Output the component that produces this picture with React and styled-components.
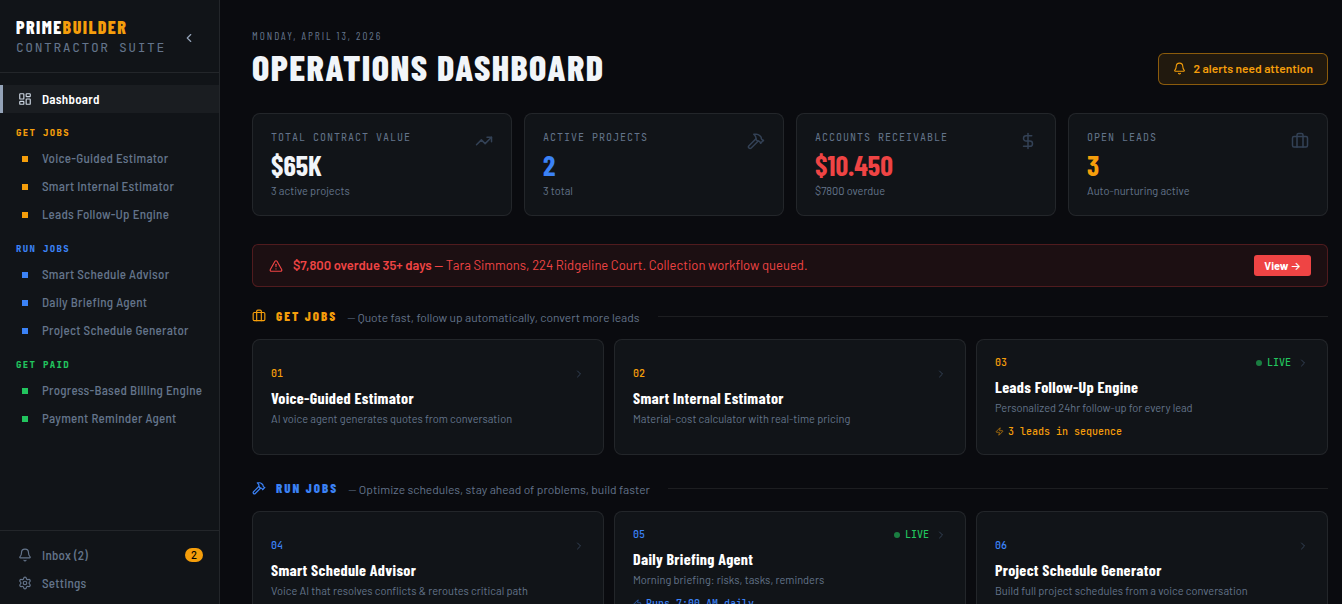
import React from "react";
import styled, { createGlobalStyle } from "styled-components";
import {
  AlertTriangle,
  Bell,
  ChevronLeft,
  ChevronRight,
  DollarSign,
  Hammer,
  LayoutDashboard,
  Settings,
  TrendingUp,
  Zap,
} from "lucide-react";

const sans = `"Barlow", "Roboto", "Liberation Sans", sans-serif`;
const semi = `"Barlow Semi Condensed", "Barlow", "Roboto", sans-serif`;
const condensed = `"Barlow Condensed", "Roboto Condensed", "Liberation Sans Narrow", "Roboto", sans-serif`;
const mono = `"JetBrains Mono", "DejaVu Sans Mono", monospace`;

const amber = "#f59e0b";
const blue = "#3b82f6";
const green = "#22c55e";
const red = "#ef4444";
const muted = "#64748b";
const line = "rgba(255, 255, 255, 0.08)";

const GlobalStyle = createGlobalStyle`
  * { box-sizing: border-box; }
  body {
    margin: 0;
    background: #0a0b0f;
    color: #f1f5f9;
    font-family: ${sans};
  }
  button { font-family: inherit; cursor: pointer; }
  h1, h2, p { margin: 0; }
`;

const Shell = styled.div`
  display: flex;
  height: 100vh;
`;

/* sidebar */

const Sidebar = styled.aside`
  display: flex;
  flex-direction: column;
  flex: none;
  width: 220px;
  background: #111418;
  border-right: 1px solid ${line};
`;

const Brand = styled.div`
  display: flex;
  align-items: center;
  justify-content: space-between;
  padding: 17px 19px 14px 16px;
  border-bottom: 1px solid ${line};
`;

const BrandName = styled.div`
  margin-bottom: 1px;
  font: 800 18px/20px ${condensed};
  letter-spacing: 0.08em;
  color: #fff;

  span { color: ${amber}; }
`;

const BrandTag = styled.div`
  font: 400 13px/20px ${mono};
  letter-spacing: 0.12em;
  color: ${muted};
  white-space: nowrap;
`;

const CollapseButton = styled.button`
  display: flex;
  padding: 4px;
  background: none;
  border: 0;
  color: #94a3b8;
`;

const Nav = styled.nav`
  flex: 1;
  padding-top: 12px;
`;

const NavGroup = styled.div`
  & + & { margin-top: 1px; }
`;

const NavLabel = styled.div`
  padding: 13px 16px 4px;
  font: 800 9px/14px ${mono};
  letter-spacing: 0.15em;
  color: ${(p) => p.$color};
`;

const NavLink = styled.a`
  display: flex;
  align-items: center;
  gap: 10px;
  height: 28px;
  padding: 0 16px 0 15px;
  border-left: 3px solid ${(p) => (p.$active ? "#94a3b8" : "transparent")};
  background: ${(p) => (p.$active ? "rgba(255, 255, 255, 0.04)" : "none")};
  font-family: ${semi};
  font-size: 13px;
  font-weight: ${(p) => (p.$active ? 600 : 500)};
  letter-spacing: 0.02em;
  color: ${(p) => (p.$active ? "#fff" : muted)};
  text-decoration: none;
  white-space: nowrap;

  svg { color: ${(p) => (p.$active ? "#cbd5e1" : muted)}; }
`;

const Square = styled.span`
  width: 6px;
  height: 6px;
  margin: 2px 4px 0;
  background: ${(p) => p.$color};
`;

const Count = styled.span`
  margin-left: auto;
  padding: 0 6px;
  border-radius: 7px;
  background: ${amber};
  font: 500 11px/14px ${sans};
  letter-spacing: 0;
  color: #000;
`;

const SidebarFoot = styled.div`
  padding: 10px 0 7px;
  border-top: 1px solid ${line};
`;

/* main column */

const Main = styled.main`
  flex: 1;
  min-width: 0;
  padding: 28px 14px 28px 32px;
  overflow-y: auto;
  scrollbar-width: none;
`;

const PageHead = styled.header`
  display: flex;
  align-items: flex-end;
  justify-content: space-between;
  margin-bottom: 28px;
`;

const DateText = styled.p`
  font: 400 11px/16px ${condensed};
  letter-spacing: 2px;
  color: ${muted};
`;

const Title = styled.h1`
  margin-top: 5px;
  font: 800 36px/36px ${condensed};
  letter-spacing: 0.04em;
`;

const AlertButton = styled.button`
  display: flex;
  align-items: center;
  gap: 8px;
  height: 32px;
  padding: 0 14px 2px;
  border: 1px solid rgba(245, 158, 11, 0.5);
  border-radius: 6px;
  background: rgba(245, 158, 11, 0.1);
  font-size: 12px;
  font-weight: 600;
  color: ${amber};
`;

const Stats = styled.section`
  display: grid;
  grid-template-columns: repeat(4, 1fr);
  gap: 12px;
  margin-bottom: 28px;
`;

const StatCard = styled.div`
  display: flex;
  justify-content: space-between;
  padding: 18px 18px 16px;
  min-height: 103px;
  border: 1px solid ${line};
  border-radius: 8px;
  background: #111418;

  svg { color: #334155; }
`;

const StatLabel = styled.div`
  font: 400 10px/12px ${mono};
  letter-spacing: 1px;
  color: ${muted};
`;

const StatValue = styled.div`
  margin-top: 5px;
  font: 700 28px/32px ${condensed};
  color: ${(p) => p.$color};
`;

const StatNote = styled.div`
  margin-top: 3px;
  font-size: 11px;
  line-height: 14px;
  color: ${muted};
`;

const Banner = styled.div`
  display: flex;
  align-items: center;
  gap: 10px;
  min-height: 43px;
  margin-bottom: 20px;
  padding: 0 16px;
  border: 1px solid rgba(239, 68, 68, 0.25);
  border-radius: 6px;
  background: rgba(239, 68, 68, 0.08);
  font-size: 13px;
  color: ${red};

  p {
    flex: 1;
    padding-bottom: 2px;
  }
  strong { font-weight: 600; }
`;

const ViewButton = styled.button`
  height: 21px;
  padding: 0 10px;
  border: 0;
  border-radius: 3px;
  background: ${red};
  font-size: 11px;
  font-weight: 700;
  color: #fff;

  span { font-family: "Inter", sans-serif; font-weight: 500; }
`;

const Section = styled.section`
  margin-bottom: 24px;
`;

const SectionHead = styled.div`
  display: flex;
  align-items: center;
  gap: 10px;
  height: 18px;
  margin-bottom: 14px;
  color: ${(p) => p.$color};

  &::after {
    content: "";
    flex: 1;
    height: 1px;
    margin-left: 8px;
    background: ${line};
  }
`;

const SectionTitle = styled.h2`
  font: 800 13px/18px ${condensed};
  letter-spacing: 2px;
`;

const SectionNote = styled.span`
  padding-top: 2px;
  font-size: 12px;
  color: ${muted};
`;

const Cards = styled.div`
  display: grid;
  grid-template-columns: repeat(3, 1fr);
  gap: 10px;
`;

const ToolCard = styled.button`
  display: flex;
  flex-direction: column;
  justify-content: center;
  min-height: 116px;
  padding: 16px 18px;
  border: 1px solid ${line};
  border-radius: 8px;
  background: #111418;
  text-align: left;
`;

const ToolTop = styled.span`
  display: flex;
  align-items: center;
  gap: 6px;
  height: 14px;
  margin-bottom: 7px;
  font: 500 10px/14px ${mono};

  svg { color: #334155; }
`;

const ToolNumber = styled.span`
  flex: 1;
  color: ${(p) => p.$color};
`;

const Live = styled.span`
  display: flex;
  align-items: center;
  gap: 5px;
  color: ${green};

  &::before {
    content: "";
    width: 6px;
    height: 6px;
    border-radius: 50%;
    background: ${green};
    opacity: 0.6;
  }
`;

const ToolName = styled.span`
  margin-bottom: 3px;
  font: 700 16px/20px ${condensed};
  letter-spacing: 0.02em;
  color: #fff;
`;

const ToolText = styled.span`
  font-size: 11px;
  line-height: 16px;
  color: ${muted};
`;

const ToolMeta = styled.span`
  display: flex;
  align-items: center;
  gap: 4px;
  margin-top: 9px;
  font: 500 10px/13px ${mono};
  color: ${(p) => p.$color};

  svg { opacity: 0.8; }
`;

//suitcase with two straps, used for leads and get jobs
const Suitcase = ({ size = 24 }) => (
  <svg width={size} height={size} viewBox="0 0 24 24" fill="none" stroke="currentColor" strokeWidth="2" strokeLinecap="round" strokeLinejoin="round">
    <path d="M16 20V4a2 2 0 0 0-2-2h-4a2 2 0 0 0-2 2v16" />
    <rect width="20" height="14" x="2" y="6" rx="2" />
  </svg>
);

const groups = [
  { label: "GET JOBS", color: amber, items: ["Voice-Guided Estimator", "Smart Internal Estimator", "Leads Follow-Up Engine"] },
  { label: "RUN JOBS", color: blue, items: ["Smart Schedule Advisor", "Daily Briefing Agent", "Project Schedule Generator"] },
  { label: "GET PAID", color: green, items: ["Progress-Based Billing Engine", "Payment Reminder Agent"] },
];

const stats = [
  { label: "TOTAL CONTRACT VALUE", value: "$65K", note: "3 active projects", color: "#f1f5f9", Icon: TrendingUp },
  { label: "ACTIVE PROJECTS", value: "2", note: "3 total", color: blue, Icon: Hammer },
  { label: "ACCOUNTS RECEIVABLE", value: "$10.450", note: "$7800 overdue", color: red, Icon: DollarSign },
  { label: "OPEN LEADS", value: "3", note: "Auto-nurturing active", color: amber, Icon: Suitcase },
];

const sections = [
  {
    title: "GET JOBS",
    note: "— Quote fast, follow up automatically, convert more leads",
    color: amber,
    Icon: Suitcase,
    tools: [
      { no: "01", name: "Voice-Guided Estimator", text: "AI voice agent generates quotes from conversation" },
      { no: "02", name: "Smart Internal Estimator", text: "Material-cost calculator with real-time pricing" },
      { no: "03", name: "Leads Follow-Up Engine", text: "Personalized 24hr follow-up for every lead", live: true, meta: "3 leads in sequence" },
    ],
  },
  {
    title: "RUN JOBS",
    note: "— Optimize schedules, stay ahead of problems, build faster",
    color: blue,
    Icon: Hammer,
    tools: [
      { no: "04", name: "Smart Schedule Advisor", text: "Voice AI that resolves conflicts & reroutes critical path" },
      { no: "05", name: "Daily Briefing Agent", text: "Morning briefing: risks, tasks, reminders", live: true, meta: "Runs 7:00 AM daily" },
      { no: "06", name: "Project Schedule Generator", text: "Build full project schedules from a voice conversation" },
    ],
  },
];

const App = () => {
  return (
    <Shell>
      <GlobalStyle />
      <Sidebar>
        <Brand>
          <div>
            <BrandName>PRIME<span>BUILDER</span></BrandName>
            <BrandTag>CONTRACTOR SUITE</BrandTag>
          </div>
          <CollapseButton aria-label="Collapse sidebar">
            <ChevronLeft size={14} />
          </CollapseButton>
        </Brand>
        <Nav>
          <NavLink href="#dashboard" $active>
            <LayoutDashboard size={14} />
            Dashboard
          </NavLink>
          {groups.map((group) => (
            <NavGroup key={group.label}>
              <NavLabel $color={group.color}>{group.label}</NavLabel>
              {group.items.map((item) => (
                <NavLink key={item} href="#tool">
                  <Square $color={group.color} />
                  {item}
                </NavLink>
              ))}
            </NavGroup>
          ))}
        </Nav>
        <SidebarFoot>
          <NavLink href="#inbox">
            <Bell size={14} />
            Inbox (2)
            <Count>2</Count>
          </NavLink>
          <NavLink href="#settings">
            <Settings size={14} />
            Settings
          </NavLink>
        </SidebarFoot>
      </Sidebar>

      <Main>
        <PageHead>
          <div>
            <DateText>MONDAY, APRIL 13, 2026</DateText>
            <Title>OPERATIONS DASHBOARD</Title>
          </div>
          <AlertButton>
            <Bell size={13} />
            2 alerts need attention
          </AlertButton>
        </PageHead>

        <Stats>
          {stats.map(({ label, value, note, color, Icon }) => (
            <StatCard key={label}>
              <div>
                <StatLabel>{label}</StatLabel>
                <StatValue $color={color}>{value}</StatValue>
                <StatNote>{note}</StatNote>
              </div>
              <Icon size={18} />
            </StatCard>
          ))}
        </Stats>

        <Banner>
          <AlertTriangle size={14} />
          <p>
            <strong>$7,800 overdue 35+ days</strong> — Tara Simmons, 224 Ridgeline Court. Collection workflow queued.
          </p>
          <ViewButton>View <span>→</span></ViewButton>
        </Banner>

        {sections.map(({ title, note, color, Icon, tools }) => (
          <Section key={title}>
            <SectionHead $color={color}>
              <Icon size={14} />
              <SectionTitle>{title}</SectionTitle>
              <SectionNote>{note}</SectionNote>
            </SectionHead>
            <Cards>
              {tools.map((tool) => (
                <ToolCard key={tool.no}>
                  <ToolTop>
                    <ToolNumber $color={color}>{tool.no}</ToolNumber>
                    {tool.live && <Live>LIVE</Live>}
                    <ChevronRight size={12} />
                  </ToolTop>
                  <ToolName>{tool.name}</ToolName>
                  <ToolText>{tool.text}</ToolText>
                  {tool.meta && (
                    <ToolMeta $color={color}>
                      <Zap size={9} />
                      {tool.meta}
                    </ToolMeta>
                  )}
                </ToolCard>
              ))}
            </Cards>
          </Section>
        ))}
      </Main>
    </Shell>
  );
};

export default App;
